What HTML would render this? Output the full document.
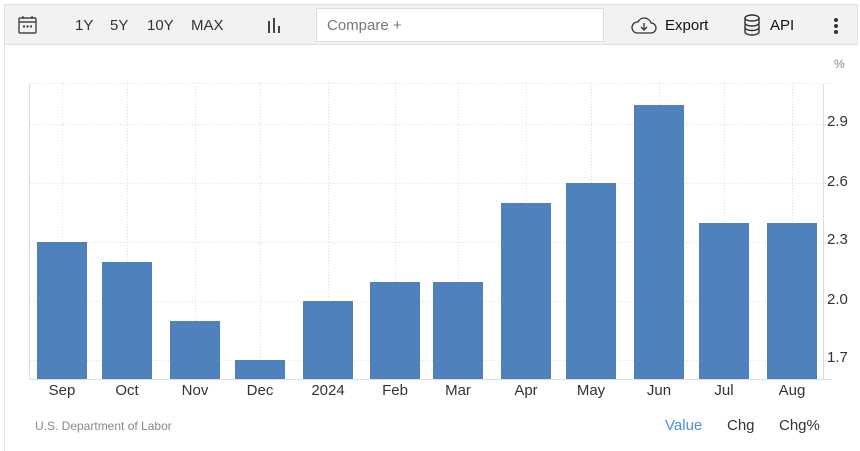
<!DOCTYPE html>
<html><head><style>
body{margin:0;width:860px;height:451px;background:#fff;font-family:"Liberation Sans",Arial,sans-serif;position:relative;overflow:hidden}
.tb{position:absolute;left:4px;top:4px;width:854px;height:41px;background:#f2f2f2;border:1px solid #e0e0e0;box-sizing:border-box}
.t{position:absolute;top:17px;font-size:15px;color:#333}
.cmp{position:absolute;left:316px;top:8px;width:288px;height:34px;background:#fff;border:1px solid #ddd;box-sizing:border-box;font-size:15px;color:#777;padding:8px 10px}
.lb{position:absolute;left:4px;top:45px;width:1px;height:406px;background:#e8e8e8}
</style></head><body>
<div class="tb"></div>
<div class="lb"></div>
<svg style="position:absolute;left:18px;top:15px" width="20" height="20" viewBox="0 0 20 20" fill="none" stroke="#444" stroke-width="1.4"><rect x="1" y="3" width="17" height="15" rx="1"/><line x1="1" y1="7" x2="18" y2="7"/><line x1="5" y1="1" x2="5" y2="4"/><line x1="14" y1="1" x2="14" y2="4"/><circle cx="6" cy="11.5" r=".5" fill="#444"/><circle cx="9.5" cy="11.5" r=".5" fill="#444"/><circle cx="13" cy="11.5" r=".5" fill="#444"/></svg>
<div class="t" style="left:75px">1Y</div>
<div class="t" style="left:110px">5Y</div>
<div class="t" style="left:147px">10Y</div>
<div class="t" style="left:191px">MAX</div>
<svg style="position:absolute;left:267px;top:18px" width="16" height="16"><rect x="1" y="3" width="2" height="12" fill="#444"/><rect x="6" y="0" width="2" height="15" fill="#444"/><rect x="11" y="8" width="2" height="7" fill="#444"/></svg>
<div class="cmp">Compare +</div>
<svg style="position:absolute;left:631px;top:16px" width="26" height="20" viewBox="0 0 26 20" fill="none" stroke="#333" stroke-width="1.3"><path d="M6 17H20a5 5 0 0 0 0-10 7 7 0 0 0-13-1 5.5 5.5 0 0 0-1 11z"/><path d="M13 7v7M10 11l3 3 3-3"/></svg>
<div class="t" style="left:665px;color:#111">Export</div>
<svg style="position:absolute;left:742px;top:14px" width="20" height="22" viewBox="0 0 20 22" fill="none" stroke="#333" stroke-width="1.4"><ellipse cx="10" cy="4" rx="7" ry="3"/><path d="M3 4v14c0 1.7 3 3 7 3s7-1.3 7-3V4M3 9c0 1.7 3 3 7 3s7-1.3 7-3M3 13.5c0 1.7 3 3 7 3s7-1.3 7-3"/></svg>
<div class="t" style="left:770px;color:#111">API</div>
<svg style="position:absolute;left:833px;top:17px" width="6" height="18"><circle cx="3" cy="3" r="2" fill="#333"/><circle cx="3" cy="9" r="2" fill="#333"/><circle cx="3" cy="15" r="2" fill="#333"/></svg>
<svg style="position:absolute;left:0;top:0" width="860" height="451">
<g stroke="#ddd" stroke-dasharray="1,2" stroke-width="1">
<line x1="30" y1="83.5" x2="832" y2="83.5"/>
<line x1="30" y1="124.5" x2="832" y2="124.5"/>
<line x1="30" y1="183.5" x2="832" y2="183.5"/>
<line x1="30" y1="242.5" x2="832" y2="242.5"/>
<line x1="30" y1="301.5" x2="832" y2="301.5"/>
<line x1="30" y1="360.5" x2="832" y2="360.5"/>
<line x1="62.5" y1="83" x2="62.5" y2="379"/><line x1="127.5" y1="83" x2="127.5" y2="379"/><line x1="195.5" y1="83" x2="195.5" y2="379"/><line x1="260.5" y1="83" x2="260.5" y2="379"/><line x1="328.5" y1="83" x2="328.5" y2="379"/><line x1="395.5" y1="83" x2="395.5" y2="379"/><line x1="458.5" y1="83" x2="458.5" y2="379"/><line x1="526.5" y1="83" x2="526.5" y2="379"/><line x1="591.5" y1="83" x2="591.5" y2="379"/><line x1="659.5" y1="83" x2="659.5" y2="379"/><line x1="724.5" y1="83" x2="724.5" y2="379"/><line x1="792.5" y1="83" x2="792.5" y2="379"/>
</g>
<line x1="29.5" y1="84" x2="29.5" y2="379" stroke="#ddd"/>
<line x1="823.5" y1="84" x2="823.5" y2="379" stroke="#ddd"/>
<line x1="29" y1="379.5" x2="832" y2="379.5" stroke="#ddd"/>
<g fill="#4f81bd">
<rect x="37" y="242" width="50" height="137"/>
<rect x="102" y="262" width="50" height="117"/>
<rect x="170" y="321" width="50" height="58"/>
<rect x="235" y="360" width="50" height="19"/>
<rect x="303" y="301" width="50" height="78"/>
<rect x="370" y="282" width="50" height="97"/>
<rect x="433" y="282" width="50" height="97"/>
<rect x="501" y="203" width="50" height="176"/>
<rect x="566" y="183" width="50" height="196"/>
<rect x="634" y="105" width="50" height="274"/>
<rect x="699" y="223" width="50" height="156"/>
<rect x="767" y="223" width="50" height="156"/>
</g>
<g font-size="15" fill="#333" font-family="Liberation Sans,Arial,sans-serif">
<text x="827" y="126">2.9</text><text x="827" y="186">2.6</text><text x="827" y="244">2.3</text><text x="827" y="304">2.0</text><text x="827" y="362">1.7</text>
<g text-anchor="middle"><text x="62" y="395">Sep</text><text x="127" y="395">Oct</text><text x="195" y="395">Nov</text><text x="260" y="395">Dec</text><text x="328" y="395">2024</text><text x="395" y="395">Feb</text><text x="458" y="395">Mar</text><text x="526" y="395">Apr</text><text x="591" y="395">May</text><text x="659" y="395">Jun</text><text x="724" y="395">Jul</text><text x="792" y="395">Aug</text></g>
</g>
<text x="834" y="68" font-size="12" fill="#888" font-family="Liberation Sans,Arial,sans-serif">%</text>
<text x="35" y="430" font-size="12" fill="#888" font-family="Liberation Sans,Arial,sans-serif">U.S. Department of Labor</text>
<g font-size="15" font-family="Liberation Sans,Arial,sans-serif"><text x="665" y="430" fill="#4a90d9">Value</text><text x="727" y="430" fill="#333">Chg</text><text x="779" y="430" fill="#333">Chg%</text></g>
</svg>
</body></html>
